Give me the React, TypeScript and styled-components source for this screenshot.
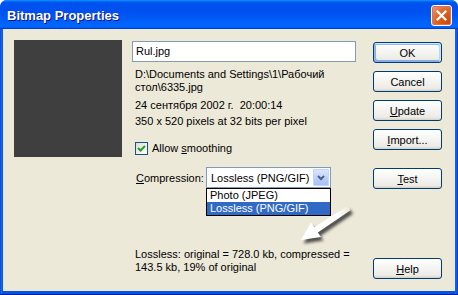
import React from 'react';
import styled, { createGlobalStyle } from 'styled-components';

const GlobalStyle = createGlobalStyle`
  html, body {
    margin: 0;
    padding: 0;
    background: #ffffff;
  }
  body {
    font-family: 'Liberation Sans', Arial, sans-serif;
    font-size: 11px;
    color: #000;
  }
`;

const Window = styled.div`
  position: relative;
  width: 458px;
  height: 295px;
  display: flex;
  flex-direction: column;
  background: linear-gradient(90deg, #0831d9 0, #166aee 1px, #0855dd 3px, #0855dd 455px, #166aee 456px, #0831d9 100%);
  border-radius: 7px 7px 0 0;
  overflow: hidden;
  box-sizing: border-box;
  border-bottom: 1px solid #001ea0;
`;

const TitleBar = styled.div`
  height: 29px;
  flex-shrink: 0;
  display: flex;
  align-items: center;
  justify-content: space-between;
  padding: 0 6px 0 7px;
  background: linear-gradient(180deg, #0997ff, #0053ee 8%, #0050ee 40%, #06f 88%, #06f 93%, #005bff 95%, #003dd7 96%, #003dd7);
`;

const Title = styled.span`
  font-family: 'Liberation Sans', Arial, sans-serif;
  font-weight: 700;
  font-size: 13px;
  color: #fff;
  text-shadow: 1px 1px #0f1089;
  margin-top: 1px;
`;

const CloseButton = styled.div`
  width: 21px;
  height: 21px;
  box-sizing: border-box;
  border: 1px solid #fff;
  border-radius: 3px;
  background: radial-gradient(circle at 90% 90%, #cc4600 0, #dc6527 55%, #e8a088 100%);
  box-shadow: inset 0 0 0 1px #e06f4e;
  display: flex;
  align-items: center;
  justify-content: center;
  margin-top: 2px;
`;

const Body = styled.div`
  flex: 1;
  margin: 0 3px 3px;
  background: #ece9d8;
  display: flex;
  padding: 11px 13px 12px 11px;
  box-sizing: border-box;
`;

const Preview = styled.div`
  width: 108px;
  height: 117px;
  flex-shrink: 0;
  background: #3f3f3f;
`;

const Middle = styled.div`
  width: 224px;
  margin-left: 10px;
  display: flex;
  flex-direction: column;
  padding-bottom: 5px;
`;

const TextField = styled.div`
  height: 21px;
  box-sizing: border-box;
  margin-top: 1px;
  border: 1px solid #7f9db9;
  background: #fff;
  padding: 3px 3px 0;
  line-height: 13px;
`;

const Info = styled.div<{ gap: number }>`
  line-height: 13px;
  margin-top: ${(p) => p.gap}px;
  padding-left: 3px;
`;

const CheckRow = styled.label`
  display: flex;
  align-items: center;
  gap: 4px;
  margin-top: 14px;
  padding-left: 3px;
  line-height: 13px;
`;

const CheckBox = styled.span`
  width: 13px;
  height: 13px;
  box-sizing: border-box;
  border: 1px solid #1c5180;
  background: linear-gradient(135deg, #dcdcd7, #fff);
  display: flex;
  align-items: center;
  justify-content: center;
`;

const CompRow = styled.div`
  position: relative;
  display: flex;
  align-items: center;
  margin-top: 12px;
  padding-left: 4px;
`;

const CompLabel = styled.span`
  width: 70px;
`;

const Select = styled.div`
  width: 125px;
  height: 21px;
  box-sizing: border-box;
  border: 1px solid #7f9db9;
  background: #fff;
  display: flex;
  align-items: center;
  justify-content: space-between;
  padding: 0 1px 0 4px;
`;

const SelectArrow = styled.span`
  width: 16px;
  height: 17px;
  box-sizing: border-box;
  border: 1px solid #c3d3fd;
  border-radius: 1px;
  background: linear-gradient(180deg, #dbe6fe, #b8cdfb 60%, #a9c1f6);
  display: flex;
  align-items: center;
  justify-content: center;
`;

const DropList = styled.div`
  position: absolute;
  left: 74px;
  top: 21px;
  width: 125px;
  box-sizing: border-box;
  border: 1px solid #000;
  background: #fff;
  z-index: 2;
`;

const DropItem = styled.div<{ selected?: boolean }>`
  height: 13px;
  line-height: 13px;
  padding-left: 3px;
  background: ${(p) => (p.selected ? '#316ac5' : '#fff')};
  color: ${(p) => (p.selected ? '#fff' : '#000')};
`;

const Summary = styled.div`
  margin-top: auto;
  line-height: 13px;
  padding-left: 3px;
`;

const Buttons = styled.div`
  margin-left: 17px;
  display: flex;
  flex-direction: column;
  padding-top: 2px;
`;

const Button = styled.div<{ isDefault?: boolean; gap?: number; pushDown?: boolean }>`
  width: 69px;
  height: 21px;
  box-sizing: border-box;
  margin-top: ${(p) => (p.pushDown ? 'auto' : `${p.gap ?? 0}px`)};
  border: 1px solid #003c74;
  border-radius: 3px;
  background: linear-gradient(180deg, #fff, #ecebe6 86%, #d6d0c5);
  display: flex;
  align-items: center;
  justify-content: center;
  ${(p) =>
    p.isDefault
      ? 'box-shadow: inset -1px 1px #cee7ff, inset 1px 2px #98b8ea, inset -2px 2px #bcd4f6, inset 1px -1px #89ade4, inset 2px -2px #89ade4;'
      : ''}
`;

const Arrow = styled.svg`
  position: absolute;
  left: 290px;
  top: 195px;
  pointer-events: none;
`;

const ARROW_POINTS = '11,45 31,42 27.8,37.4 60.4,15.2 57.6,10.8 24.2,32.6 21,27.6';

export default function App() {
  return (
    <>
      <GlobalStyle />
      <Window>
        <TitleBar>
          <Title>Bitmap Properties</Title>
          <CloseButton>
            <svg width="11" height="11" viewBox="0 0 11 11">
              <path d="M1.5 1.5 L9.5 9.5 M9.5 1.5 L1.5 9.5" stroke="#fff" strokeWidth="2.2" strokeLinecap="square" />
            </svg>
          </CloseButton>
        </TitleBar>
        <Body>
          <Preview />
          <Middle>
            <TextField>Rul.jpg</TextField>
            <Info gap={6}>
              D:\Documents and Settings\1\Рабочий
              <br />
              стол\6335.jpg
            </Info>
            <Info gap={5}>24 сентября 2002 г.&nbsp;&nbsp;20:00:14</Info>
            <Info gap={3}>350 x 520 pixels at 32 bits per pixel</Info>
            <CheckRow>
              <CheckBox>
                <svg width="9" height="9" viewBox="0 0 9 9">
                  <path d="M1 4 L3.5 6.5 L8 2" fill="none" stroke="#21a121" strokeWidth="2" />
                </svg>
              </CheckBox>
              <span>
                Allow <u>s</u>moothing
              </span>
            </CheckRow>
            <CompRow>
              <CompLabel>
                <u>C</u>ompression:
              </CompLabel>
              <Select>
                <span>Lossless (PNG/GIF)</span>
                <SelectArrow>
                  <svg width="8" height="6" viewBox="0 0 8 6">
                    <path d="M1 1 L4 4 L7 1" fill="none" stroke="#4d6185" strokeWidth="2" />
                  </svg>
                </SelectArrow>
              </Select>
              <DropList>
                <DropItem>Photo (JPEG)</DropItem>
                <DropItem selected>Lossless (PNG/GIF)</DropItem>
              </DropList>
            </CompRow>
            <Summary>
              Lossless: original = 728.0 kb, compressed =
              <br />
              143.5 kb, 19% of original
            </Summary>
          </Middle>
          <Buttons>
            <Button isDefault>OK</Button>
            <Button gap={8}>Cancel</Button>
            <Button gap={8}>
              <span>
                <u>U</u>pdate
              </span>
            </Button>
            <Button gap={8}>
              <span>
                <u>I</u>mport...
              </span>
            </Button>
            <Button gap={18}>
              <span>
                <u>T</u>est
              </span>
            </Button>
            <Button pushDown>
              <span>
                <u>H</u>elp
              </span>
            </Button>
          </Buttons>
        </Body>
        <Arrow width="70" height="55" viewBox="0 0 70 55">
          <defs>
            <filter id="blur" x="-30%" y="-30%" width="160%" height="160%">
              <feGaussianBlur stdDeviation="1.8" />
            </filter>
            <linearGradient id="fade" x1="60" y1="13" x2="11" y2="45" gradientUnits="userSpaceOnUse">
              <stop offset="0" stopColor="#ece9d8" />
              <stop offset="0.25" stopColor="#ffffff" />
              <stop offset="1" stopColor="#ffffff" />
            </linearGradient>
          </defs>
          <polygon points={ARROW_POINTS} fill="#333" opacity="0.85" transform="translate(2.5,3.5)" filter="url(#blur)" />
          <polygon points={ARROW_POINTS} fill="url(#fade)" />
        </Arrow>
      </Window>
    </>
  );
}
